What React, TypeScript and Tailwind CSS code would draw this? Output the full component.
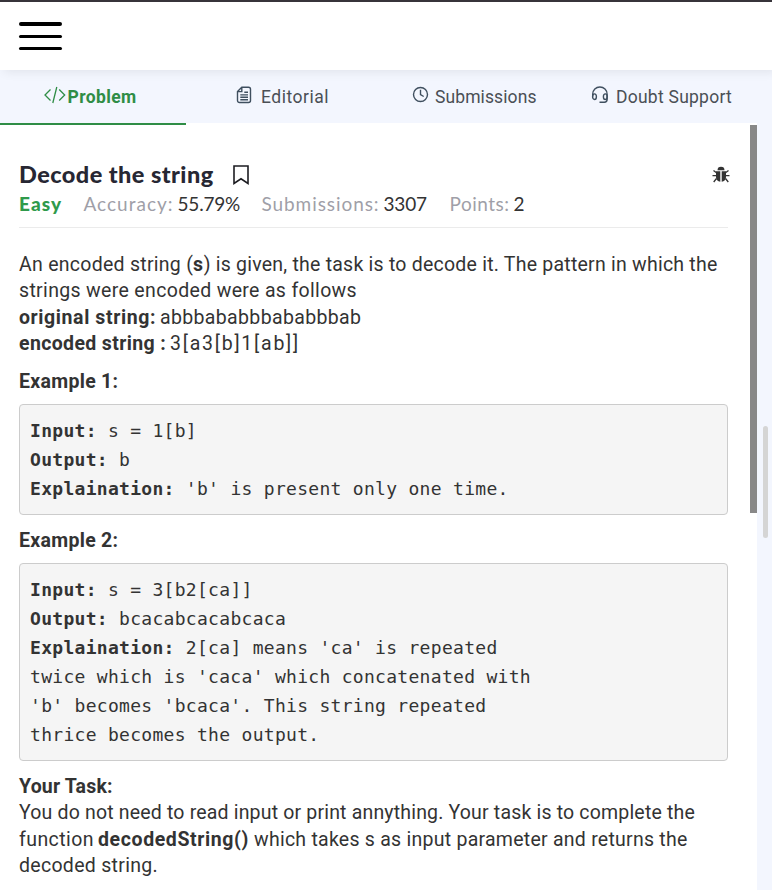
import type { ReactNode } from "react";

function Menu() {
  return (
    <div className="flex w-[43px] flex-col">
      <span className="h-1 rounded-sm bg-black" />
      <span className="mt-[9px] h-[3px] rounded-sm bg-black" />
      <span className="mt-[9px] h-[3px] rounded-sm bg-black" />
    </div>
  );
}

function CodeIcon() {
  return (
    <svg width="22" height="18" viewBox="0 0 22 18" fill="none" stroke="#2f8d46" strokeWidth="1.3">
      <path d="M6.5 3.5 1 9l5.5 5.5M15.200 3.500 20.700 9l-5.500 5.500M12.800 1 8.800 17" />
    </svg>
  );
}

function EditorialIcon() {
  return (
    <svg width="16" height="18" viewBox="0 0 16 18" fill="none" stroke="#3f4f5f" strokeWidth="1.4">
      <path d="M5.800 1.300H12.500a2 2 0 0 1 2 2v11.200a2 2 0 0 1-2 2H3.500a2 2 0 0 1-2-2V5.600zM5.800 1.300v4.300H1.500M8.300 6.200H12M4.300 8.900H12M4.300 11.300H12M4.300 13.700H12" />
    </svg>
  );
}

function ClockIcon() {
  return (
    <svg width="17" height="17" viewBox="0 0 17 17" fill="none" stroke="#3f4f5f" strokeWidth="1.4">
      <circle cx="8.500" cy="8.500" r="7" />
      <path d="M8.500 3.700v5l3.200 1.800" />
    </svg>
  );
}

function HeadsetIcon() {
  return (
    <svg width="18" height="18" viewBox="0 0 18 18" fill="none" stroke="#3f4f5f" strokeWidth="1.4">
      <path d="M1.700 10.500V8.200a7.200 7.200 0 0 1 14.400 0v5.300a2.700 2.700 0 0 1-2.700 2.700H8.500" />
      <ellipse cx="3.500" cy="10.700" rx="1.900" ry="2.800" />
      <ellipse cx="14.300" cy="10.700" rx="1.900" ry="2.800" />
    </svg>
  );
}

function BookmarkIcon() {
  return (
    <svg width="16" height="20" viewBox="0 0 16 20" fill="none" stroke="#1d1d22" strokeWidth="1.600">
      <path d="M1 1h14v17.500l-7-4.700-7 4.700z" />
    </svg>
  );
}

function BugIcon() {
  return (
    <svg width="18" height="18" viewBox="0 0 18 18" fill="#333">
      <path d="M5.500 4.200a3.500 3.400 0 0 1 7 0z" />
      <path d="M4 5.200h4.300v10.600C5.700 15.500 4 13.800 4 11zM9.700 5.200H14V11c0 2.800-1.700 4.500-4.300 4.800z" />
      <path d="M4.500 6.700 1.500 4.500M4 9.700H.5M4.500 12.500 1.700 16M13.500 6.700l3-2.200M14 9.700h3.500M13.500 12.500l2.800 3.500" fill="none" stroke="#333" strokeWidth="1.300" />
    </svg>
  );
}

const pre =
  "h-fit rounded border border-[#ccc] bg-[#f5f5f5] px-[10px] py-[11px] font-['DejaVu_Sans_Mono',monospace] text-[18px] leading-[29px] tracking-[0.295px] whitespace-pre";

function Stat({ label, value, labelClass, valueClass }: { label: ReactNode; value: string; labelClass: string; valueClass: string }) {
  return (
    <div className="flex">
      <span className={`shrink-0 text-[#9f9fa8] ${labelClass}`}>{label}</span>
      <span className={`shrink-0 text-[#333] ${valueClass}`}>{value}</span>
    </div>
  );
}

export default function App() {
  return (
    <div className="flex h-[890px] w-[772px] flex-col overflow-hidden bg-[#f3f6fe] font-[Roboto,sans-serif] text-[#333]">
      <header className="relative h-[70px] shrink-0 border-t-2 border-[#37343a] bg-white pt-5 pl-[19px] shadow-[4px_2px_10px_rgba(0,0,0,0.08)]">
        <Menu />
      </header>

      <nav className="relative z-10 flex h-[53px] shrink-0 text-[17.500px] leading-[24px] text-[#4a4f55]">
        <div className="flex h-[55px] w-[186px] shrink-0 border-b-2 border-[#2f8d46] pt-[15px] pl-[43.500px] text-[#2f8d46]">
          <span className="pt-px"><CodeIcon /></span>
          <b className="ml-[2px] tracking-[0.370px]">Problem</b>
        </div>
        <div className="flex w-[186px] shrink-0 pt-[15px] pl-[50px]">
          <span className="pt-px"><EditorialIcon /></span>
          <span className="ml-[9px] tracking-[0.510px]">Editorial</span>
        </div>
        <div className="flex w-[186px] shrink-0 pt-[15px] pl-10">
          <span className="pt-px"><ClockIcon /></span>
          <span className="ml-[6px] tracking-[0.100px]">Submissions</span>
        </div>
        <div className="flex shrink-0 pt-[15px] pl-[33px]">
          <span className="pt-px"><HeadsetIcon /></span>
          <span className="ml-[7px] tracking-[0.249px] whitespace-nowrap">Doubt Support</span>
        </div>
      </nav>

      <div className="flex min-h-0 flex-1">
        <div className="flex w-[757px] shrink-0 bg-white">
          <main className="ml-[19px] w-[709px] shrink-0">
            <div className="mt-[38px] flex h-[28px] items-center">
              <h1 className="w-[213.500px] font-[Lato,sans-serif] text-[23.500px] font-black tracking-[0.440px] whitespace-nowrap text-[#272733]">Decode the string</h1>
              <BookmarkIcon />
              <span className="ml-auto -mr-[2px]">
                <BugIcon />
              </span>
            </div>
            <div className="flex h-[39px] border-b border-[#ebebeb] pt-[3px] font-[Lato,sans-serif] text-[19px] leading-[24px] whitespace-nowrap">
              <b className="w-[64.500px] shrink-0 font-black tracking-[1.100px] text-[#2f9a4b]">Easy</b>
              <Stat label="Accuracy:" value="55.79%" labelClass="w-[94px] tracking-[1px]" valueClass="w-[84px] tracking-[-0.200px]" />
              <Stat label="Submissions:" value="3307" labelClass="w-[122px] tracking-[0.924px]" valueClass="w-[66px] tracking-[-0.200px]" />
              <Stat label="Points:" value="2" labelClass="w-[64px] tracking-[0.500px]" valueClass="" />
            </div>

            <div className="mt-[24px] text-[19.500px] leading-[26.400px] whitespace-nowrap">
              <p>
                <span className="tracking-[0.270px]">An encoded string (</span>
                <b className="tracking-[0.500px]">s</b>
                <span className="tracking-[0.230px]">) is given, the task is to decode it. The pattern in which the</span>
              </p>
              <p className="tracking-[0.335px]">strings were encoded were as follows</p>
              <p className="flex">
                <b className="w-[141px] tracking-[0.596px]">original string:</b>
                <span className="tracking-[0.350px]">abbbababbbababbbab</span>
              </p>
              <p className="flex">
                <b className="w-[151px] tracking-[0.360px]">encoded string :</b>
                <span className="tracking-[1.768px]">3[a3[b]1[ab]]</span>
              </p>
              <p className="mt-[11px] font-bold tracking-[0.300px]">Example 1:</p>
            </div>

            <pre className={`mt-[9px] ${pre}`}>
              <b>Input:</b>{" s = 1[b]\n"}
              <b>Output:</b>{" b\n"}
              <b>Explaination:</b>{" 'b' is present only one time."}
            </pre>

            <p className="mt-[13px] text-[19.500px] leading-[26px] font-bold tracking-[0.300px]">Example 2:</p>

            <pre className={`mt-[9px] ${pre}`}>
              <b>Input:</b>{" s = 3[b2[ca]]\n"}
              <b>Output:</b>{" bcacabcacabcaca\n"}
              <b>Explaination:</b>{" 2[ca] means 'ca' is repeated\ntwice which is 'caca' which concatenated with\n'b' becomes 'bcaca'. This string repeated\nthrice becomes the output."}
            </pre>

            <div className="mt-[13px] text-[19.500px] leading-[26.400px] whitespace-nowrap">
              <p className="font-bold tracking-[0.180px]">Your Task:</p>
              <p className="tracking-[0.177px]">You do not need to read input or print annything. Your task is to complete the</p>
              <p className="flex">
                <span className="w-[79px] tracking-[0.434px]">function</span>
                <b className="w-[156px] tracking-[0.613px]">decodedString()</b>
                <span className="tracking-[0.250px]">which takes s as input parameter and returns the</span>
              </p>
              <p className="tracking-[0.300px]">decoded string.</p>
            </div>
          </main>
          <div className="mt-[2px] ml-auto h-[388px] w-[7px] bg-[#888]" />
        </div>
        <div className="mt-[303px] ml-[6px] h-[112px] w-[5px] rounded-full bg-[#d5d5d5]" />
      </div>
    </div>
  );
}
